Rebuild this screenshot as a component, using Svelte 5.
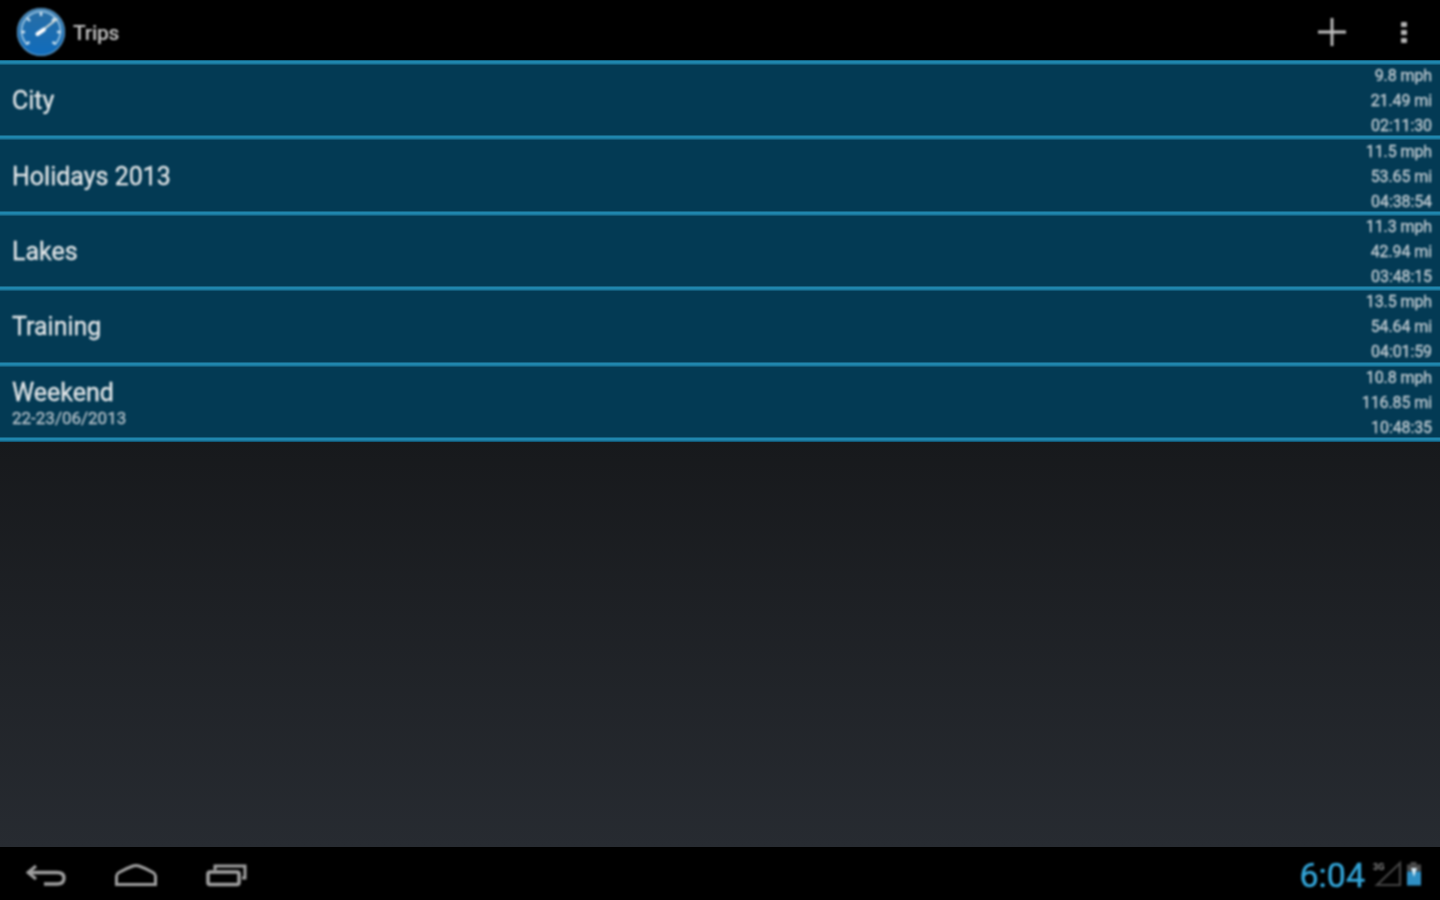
<script>
  const trips = [
    { name: 'City', stats: ['9.8 mph', '21.49 mi', '02:11:30'] },
    { name: 'Holidays 2013', stats: ['11.5 mph', '53.65 mi', '04:38:54'] },
    { name: 'Lakes', stats: ['11.3 mph', '42.94 mi', '03:48:15'] },
    { name: 'Training', stats: ['13.5 mph', '54.64 mi', '04:01:59'] },
    { name: 'Weekend', sub: '22-23/06/2013', stats: ['10.8 mph', '116.85 mi', '10:48:35'] }
  ];
</script>

<div class="screen">
  <header class="bar">
    <svg class="logo" viewBox="0 0 50 50" width="50" height="50">
      <defs>
        <linearGradient id="dial" x1="0" y1="0" x2="0" y2="1">
          <stop offset="0" stop-color="#2a6ea3" />
          <stop offset="1" stop-color="#0f6cbd" />
        </linearGradient>
      </defs>
      <circle cx="25" cy="25" r="24" fill="url(#dial)" />
      <circle cx="25" cy="25" r="23.4" fill="none" stroke="#5f98c2" stroke-width="1.2" />
      <path d="M10.5 37 A19.5 19.5 0 1 1 39.5 37" fill="none" stroke="#8fbcdc" stroke-width="2" stroke-linecap="round" />
      <path d="M25 5 V9 M11 11 L14 14 M39 11 L36 14 M5 25 H9 M45 25 H41 M10.5 37 L13.5 35 M39.5 37 L36.5 35" stroke="#cfe2ef" stroke-width="2.4" />
      <path d="M21 27.5 L41 12" stroke="#d4dcd8" stroke-width="2" stroke-linecap="round" />
      <path d="M21.5 27 L28 22.5" stroke="#ffffff" stroke-width="4" stroke-linecap="round" />
    </svg>
    <span class="title">Trips</span>
    <svg class="plus" viewBox="0 0 28 28" width="28" height="28">
      <path d="M0 14 H28 M14 0 V28" stroke="#c0c0c0" stroke-width="2.8" />
    </svg>
    <div class="dots"><i></i><i></i><i></i></div>
  </header>

  <main class="list">
    <div class="sep"></div>
    {#each trips as t}
      <div class="row">
        <div class="names">
          <div class="name">{t.name}</div>
          {#if t.sub}<div class="sub">{t.sub}</div>{/if}
        </div>
        <div class="stats">
          {#each t.stats as s}<div>{s}</div>{/each}
        </div>
      </div>
      <div class="sep"></div>
    {/each}
  </main>

  <div class="fill"></div>

  <footer class="nav">
    <svg class="back" viewBox="0 0 40 24" width="40" height="24" fill="none" stroke="#a0a0a0" stroke-width="3">
      <path d="M10 2 L2 8.5 L10 15" />
      <path d="M2 8.5 H31 Q38 8.5 38 14 Q38 20 31 20 H18" stroke-width="3.4" />
    </svg>
    <svg class="home" viewBox="0 0 42 22" width="42" height="22" fill="none" stroke="#a0a0a0" stroke-width="3">
      <path d="M1.5 20.5 V12 Q1.5 10 4 8.5 Q12 4 18 2 Q21 1 24 2 Q30 4 38 8.5 Q40.5 10 40.5 12 V20.5 Z" />
    </svg>
    <svg class="recent" viewBox="0 0 42 24" width="42" height="24" fill="none" stroke="#a0a0a0" stroke-width="3">
      <rect x="2" y="9" width="31" height="12.5" rx="2" stroke-width="3.6" />
      <path d="M9 7 V3 H39 V15 H36" />
    </svg>
    <div class="status">
      <span class="clock">6:04</span>
      <svg class="signal" viewBox="0 0 30 28" width="30" height="28">
        <text x="0" y="10" class="net">3G</text>
        <path d="M4 25 L27 3 V25 Z" fill="none" stroke="#444" stroke-width="2.2" />
      </svg>
      <svg class="battery" viewBox="0 0 16 24" width="16" height="24">
        <rect x="4.5" y="0" width="6" height="3" fill="#4a4a4a" />
        <rect x="1" y="2.5" width="14" height="7" fill="#4a4a4a" />
        <rect x="1" y="9.5" width="14" height="14" fill="#2f8fc4" />
        <path d="M5 6 H11 L8 15 Z" fill="#d8eaf4" />
      </svg>
    </div>
  </footer>
</div>

<style>
  :global(body) {
    margin: 0;
    background: #000;
  }

  .screen {
    width: 1440px;
    height: 900px;
    display: flex;
    flex-direction: column;
    overflow: hidden;
    font-family: Roboto, "Liberation Sans", sans-serif;
    background: linear-gradient(#111315 0, #17191c 440px, #272b31 847px);
  }

  .bar {
    flex: 0 0 60px;
    display: flex;
    align-items: center;
    background: #000;
    padding: 4px 33px 0 16px;
    box-sizing: border-box;
  }

  .logo {
    flex: none;
    filter: blur(0.8px);
  }

  .title {
    margin-left: 7px;
    margin-top: 1px;
    flex: 1;
    font-size: 21px;
    font-weight: 500;
    letter-spacing: -0.3px;
    color: #c4c4c4;
    filter: blur(0.9px);
  }

  .plus {
    margin-right: 55px;
    margin-left: 3px;
    filter: blur(0.8px);
  }

  .dots {
    display: flex;
    flex-direction: column;
    gap: 3px;
    filter: blur(0.9px);
  }

  .dots i {
    display: block;
    width: 6px;
    height: 5px;
    background: #b4b4b4;
    border-radius: 1px;
  }

  .list {
    flex: none;
    display: flex;
    flex-direction: column;
    background: #033a54;
  }

  .sep {
    height: 5px;
    background: linear-gradient(#0f4f6b, #1f86ae 30%, #1f86ae 60%, #0c4a66);
  }

  .row {
    height: 70.4px;
    display: flex;
    align-items: center;
    justify-content: space-between;
    padding: 0 8px 0 12px;
  }

  .names {
    margin-top: 2px;
  }

  .name {
    font-size: 25px;
    line-height: 30px;
    color: #e2e6e8;
    -webkit-text-stroke: 0.3px currentColor;
    filter: blur(0.8px);
  }

  .sub {
    font-size: 17px;
    line-height: 20px;
    color: #b4c0c8;
    -webkit-text-stroke: 0.3px currentColor;
    filter: blur(0.9px);
  }

  .stats {
    text-align: right;
    font-size: 16px;
    line-height: 25px;
    margin-top: 1px;
    color: #c4ced4;
    -webkit-text-stroke: 0.3px currentColor;
    filter: blur(0.9px);
    letter-spacing: -0.1px;
  }

  .fill {
    flex: 1;
  }

  .nav {
    flex: 0 0 53px;
    background: #000;
    display: flex;
    align-items: center;
    padding: 0 18px 0 26px;
  }

  .back {
    margin-top: 4px;
    filter: blur(0.9px);
  }

  .home {
    margin-left: 49px;
    margin-top: 2px;
    filter: blur(0.9px);
  }

  .recent {
    margin-left: 49px;
    margin-top: 2px;
    filter: blur(0.9px);
  }

  .status {
    margin-left: auto;
    display: flex;
    align-items: center;
  }

  .clock {
    font-size: 34px;
    color: #33a5d8;
    -webkit-text-stroke: 0.4px currentColor;
    margin-top: 2px;
    filter: blur(0.8px);
  }

  .signal {
    margin-left: 8px;
    filter: blur(0.8px);
  }

  .net {
    font-size: 9px;
    font-weight: 700;
    fill: #888;
    font-family: Roboto, sans-serif;
  }

  .battery {
    margin-left: 3px;
    filter: blur(0.8px);
  }
</style>
